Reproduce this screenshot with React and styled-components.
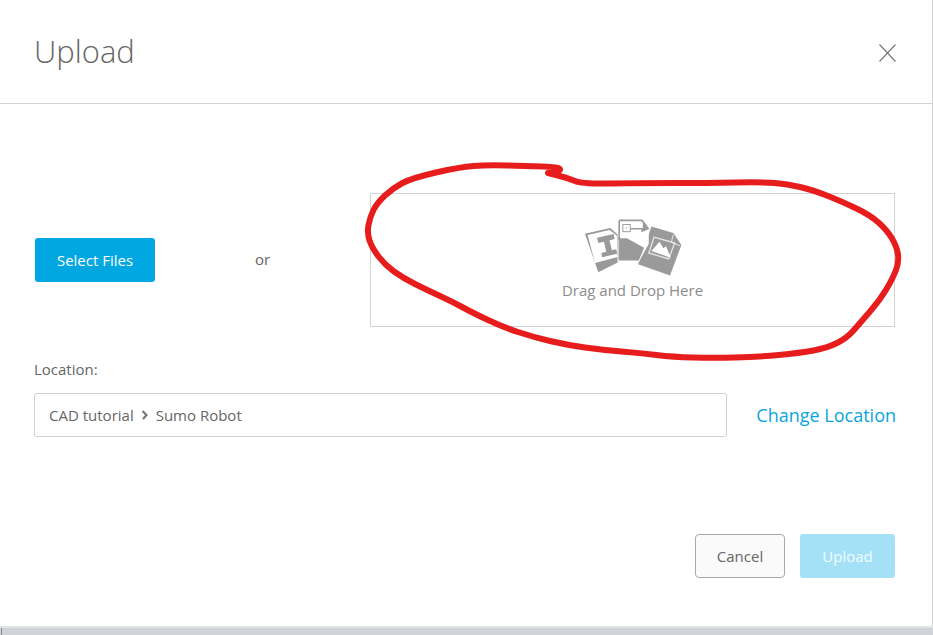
import React from "react";
import styled, { createGlobalStyle } from "styled-components";

const Global = createGlobalStyle`
  html, body { margin: 0; padding: 0; background: #fff; }
  body { font-family: "Open Sans", "Liberation Sans", sans-serif; color: #666; }
`;

const Page = styled.div`
  position: relative;
  width: 933px;
  height: 635px;
  overflow: hidden;
  display: flex;
  flex-direction: column;
  background: #fff;
`;

const Dialog = styled.div`
  width: 933px;
  height: 626px;
  flex: none;
  box-sizing: border-box;
  border-right: 1px solid #d4d4d4;
  display: flex;
  flex-direction: column;
`;

const Header = styled.header`
  height: 104px;
  flex: none;
  box-sizing: border-box;
  border-bottom: 1px solid #d2d2d2;
  display: flex;
  align-items: center;
  justify-content: space-between;
  padding: 0 36px 0 34px;
`;

const Title = styled.h1`
  margin: -2px 0 0;
  font-size: 31px;
  line-height: 40px;
  font-weight: 300;
  color: #666;
`;

const CloseButton = styled.button`
  border: 0;
  background: none;
  padding: 0;
  margin-top: 3px;
  width: 17px;
  height: 18px;
  display: block;
  line-height: 0;
`;

const UploadRow = styled.div`
  display: flex;
  align-items: center;
  margin-top: 89px;
  padding: 0 37px 0 35px;
`;

const PrimaryButton = styled.button`
  height: 44px;
  flex: none;
  border: 0;
  border-radius: 3px;
  background: ${p => (p.$disabled ? "#a4e0f6" : "#00a7e1")};
  color: ${p => (p.$disabled ? "#f2fbfe" : "#fff")};
  font: 15px "Open Sans", sans-serif;
  padding: 0;
  width: ${p => (p.$disabled ? "95px" : "120px")};
`;

const OrLabel = styled.span`
  flex: 1;
  text-align: center;
  font-size: 15px;
  margin-top: -2px;
  color: #666;
`;

const DropZone = styled.div`
  width: 525px;
  height: 134px;
  flex: none;
  box-sizing: border-box;
  border: 1px solid #d2d2d2;
  display: flex;
  flex-direction: column;
  align-items: center;
  padding-top: 23px;
`;

const DropText = styled.span`
  margin-top: 3px;
  font-size: 15px;
  line-height: 20px;
  color: #8c8c8c;
`;

const LocationLabel = styled.label`
  display: block;
  margin: 32px 0 0 34px;
  font-size: 15px;
  line-height: 20px;
  color: #666;
`;

const LocationRow = styled.div`
  display: flex;
  align-items: center;
  justify-content: space-between;
  margin-top: 14px;
  padding: 0 36px 0 34px;
`;

const LocationBox = styled.div`
  width: 693px;
  height: 44px;
  box-sizing: border-box;
  border: 1px solid #d0d0d0;
  border-radius: 3px;
  display: flex;
  align-items: center;
  gap: 7px;
  padding-left: 14px;
  font-size: 15px;
  color: #666;
`;

const ChangeLink = styled.a`
  font-size: 18px;
  line-height: 24px;
  color: #0aa5dc;
`;

const Footer = styled.footer`
  display: flex;
  justify-content: flex-end;
  gap: 15px;
  margin-top: 97px;
  padding-right: 37px;
`;

const CancelButton = styled.button`
  width: 90px;
  height: 44px;
  box-sizing: border-box;
  border: 1px solid #a8a8a8;
  border-radius: 4px;
  background: #fafafa;
  color: #666;
  font: 15px "Open Sans", sans-serif;
  padding: 0;
`;

const BottomBand = styled.div`
  flex: 1;
  box-sizing: border-box;
  border-top: 2px solid #e2e3e4;
  background: #d0d4d8;
  display: flex;
`;

const Grip = styled.span`
  width: 1px;
  margin-left: 1px;
  background: #8a8d90;
`;

const Scribble = styled.svg`
  position: absolute;
  left: 0;
  top: 0;
  pointer-events: none;
`;

const points = [
  [548, 173], [555, 172], [561, 170], [558, 167], [527, 166], [487, 165], [460, 167], [412, 178],
  [393, 188], [377, 203], [370, 217], [367, 233], [372, 248], [385, 265], [403, 278],
  [427, 290], [453, 302], [473, 313], [503, 327], [533, 337], [567, 345], [603, 350],
  [640, 353], [673, 357], [713, 358], [757, 357], [800, 353], [827, 348], [847, 338],
  [860, 323], [880, 300], [893, 278], [899, 262], [897, 247], [887, 230], [870, 215],
  [843, 202], [813, 190], [787, 184], [763, 182], [707, 183], [640, 183], [582, 184],
  [568, 178], [548, 173],
];

const smoothPath = pts => {
  let d = `M${pts[0][0]} ${pts[0][1]}`;
  for (let i = 1; i < pts.length - 1; i++) {
    const mx = (pts[i][0] + pts[i + 1][0]) / 2;
    const my = (pts[i][1] + pts[i + 1][1]) / 2;
    d += ` Q${pts[i][0]} ${pts[i][1]} ${mx} ${my}`;
  }
  const last = pts[pts.length - 1];
  return `${d} L${last[0]} ${last[1]}`;
};

const FilesIcon = () => (
  <svg width="103" height="60" viewBox="60 50 310 180" style={{ display: "block" }}>
    {/* left document */}
    <path d="M72 100L148 83L172 104L172 186L112 216Z" fill="#9a9a9a" />
    <path d="M80 104L146 89L168 106L170 170L102 188Z" fill="#fff" />
    <path d="M108 112L158 101L161 116L146 120L153 150L166 147L169 160L124 171L121 158L136 154L129 124L112 128Z" fill="#9a9a9a" />
    {/* right document */}
    <path d="M272 78L338 98L362 134L328 226L232 192Z" fill="#9a9a9a" />
    <path d="M280 110L342 128L324 176L264 158Z" fill="none" stroke="#e6e6e6" strokeWidth="4" />
    <path d="M272 152L296 124L308 144L316 138L330 172Z" fill="#fff" />
    <path d="M338 102L332 126L358 136" fill="none" stroke="#e6e6e6" strokeWidth="3" />
    {/* middle document */}
    <path d="M170 57L246 57L264 84L264 130L234 185L170 185Z" fill="#fff" />
    <path d="M175 60L244 60L262 85L244 92L244 85L208 85M175 60L175 118" fill="none" stroke="#9a9a9a" strokeWidth="5" />
    <path d="M246 62L262 85L246 92Z" fill="#9a9a9a" />
    <path d="M173 114L198 114L250 142L234 181L173 181Z" fill="#9a9a9a" />
    <rect x="186" y="72" width="22" height="22" fill="#fff" stroke="#8c8c8c" strokeWidth="2.5" />
    <rect x="195" y="81" width="3" height="3" fill="#777" />
  </svg>
);

export default function App() {
  return (
    <Page>
      <Global />
      <Dialog>
        <Header>
          <Title>Upload</Title>
          <CloseButton aria-label="Close">
            <svg width="17" height="18" viewBox="0 0 17 18">
              <path d="M0.5 0.5L16.5 17.5M16.5 0.5L0.5 17.5" stroke="#777" strokeWidth="1.2" fill="none" />
            </svg>
          </CloseButton>
        </Header>
        <UploadRow>
          <PrimaryButton>Select Files</PrimaryButton>
          <OrLabel>or</OrLabel>
          <DropZone>
            <FilesIcon />
            <DropText>Drag and Drop Here</DropText>
          </DropZone>
        </UploadRow>
        <LocationLabel>Location:</LocationLabel>
        <LocationRow>
          <LocationBox>
            <span>CAD tutorial</span>
            <svg width="8" height="10" viewBox="0 0 8 10">
              <path d="M1.5 1L5.5 5L2 9" stroke="#777" strokeWidth="2.2" fill="none" />
            </svg>
            <span>Sumo Robot</span>
          </LocationBox>
          <ChangeLink>Change Location</ChangeLink>
        </LocationRow>
        <Footer>
          <CancelButton>Cancel</CancelButton>
          <PrimaryButton $disabled>Upload</PrimaryButton>
        </Footer>
      </Dialog>
      <BottomBand>
        <Grip />
      </BottomBand>
      <Scribble width="933" height="635" viewBox="0 0 933 635">
        <path d={smoothPath(points)} fill="none" stroke="#e71c1c" strokeWidth="6" strokeLinecap="round" strokeLinejoin="round" />
      </Scribble>
    </Page>
  );
}
